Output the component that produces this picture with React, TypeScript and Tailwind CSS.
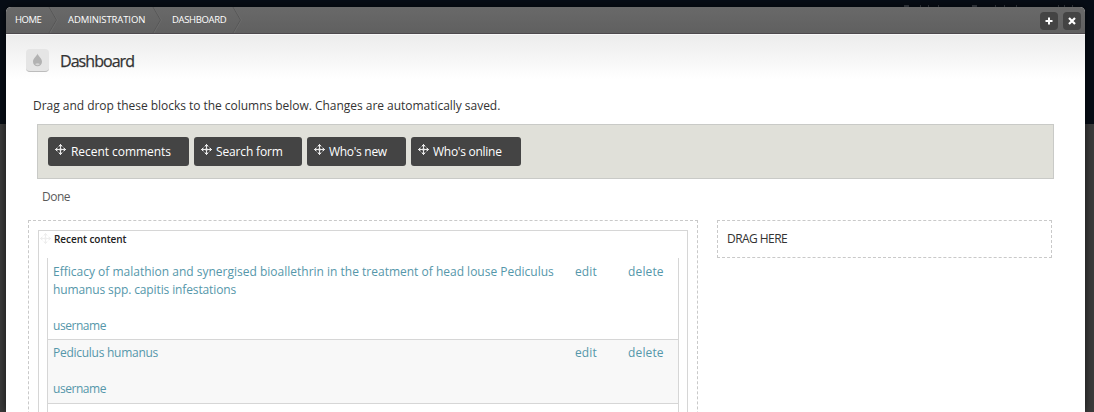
import type { ReactNode } from "react";

function MoveIcon({ className }: { className: string }) {
  return (
    <svg className={className} width="11" height="11" viewBox="0 0 11 11" shapeRendering="crispEdges">
      <path d="M5 0h1v11H5zM0 5h11v1H0zM4 1h3v1H4zM4 9h3v1H4zM1 4h1v3H1zM9 4h1v3H9z" fill="currentColor" />
      <path d="M3 2h5v1H3zM3 8h5v1H3zM2 3h1v5H2zM8 3h1v5H8zM4 4h3v3H4z" fill="currentColor" opacity=".35" />
    </svg>
  );
}

function Crumb({ children, className }: { children: ReactNode; className: string }) {
  return (
    <div className={`flex h-[26px] shrink-0 items-center justify-between ${className}`}>
      <span className="whitespace-nowrap">{children}</span>
      <svg width="10" height="26" viewBox="0 0 10 26" fill="none">
        <path d="M1 0L8.500 13L1 26" stroke="#575757" />
        <path d="M2 0L9.500 13L2 26" stroke="#6b6b6b" />
      </svg>
    </div>
  );
}

function Block({ label, className }: { label: string; className: string }) {
  return (
    <div className={`flex h-[29px] items-center rounded-[3px] bg-[#444] pl-[7px] text-white ${className}`}>
      <MoveIcon className="mb-[4px] shrink-0 text-[#e8e8e8]" />
      <span className="whitespace-nowrap">{label}</span>
    </div>
  );
}

function Row({ children, className }: { children: ReactNode; className: string }) {
  return (
    <div className={`flex border-b border-[#d6d6d6] pl-[5px] leading-[18px] text-[#5597aa] ${className}`}>
      <div className="w-[522px] shrink-0">
        {children}
        <p className="mt-[18px] tracking-[-0.45px]">username</p>
      </div>
      <span className="w-[53px] shrink-0 tracking-[0.1px]">edit</span>
      <span className="tracking-[0.15px]">delete</span>
    </div>
  );
}

export default function App() {
  return (
    <div className="h-[412px] w-[1094px] overflow-hidden bg-[linear-gradient(#070d16_124px,#3b3b3b_124px)] font-['Open_Sans',sans-serif] text-xs text-[#333]">
      <div className="flex h-[7px] items-end justify-end pr-[14px]">
        <svg width="180" height="2" viewBox="0 0 180 2" fill="none">
          <path d="M4 1h5M20 1h1M28 1h1M38 1h1M72 1h5M95 1h1M104 1h1M116 1h1M158 1h1M164 1h1M172 1h1" stroke="#2b2f35" strokeWidth="2" />
        </svg>
      </div>
      <main className="ml-1.5 h-[405px] w-[1079px] rounded-t-[5px] bg-white shadow-[0_0_9px_#000a]">
        <nav className="flex h-[27px] rounded-t-[5px] border-b border-[#4d494d] bg-linear-to-b from-[#696969] to-[#606060] pl-[9px] text-[9.5px] text-white">
          <Crumb className="w-[43px] tracking-[-0.5px]">HOME</Crumb>
          <Crumb className="ml-[10px] w-[94px] tracking-[-0.1px]">ADMINISTRATION</Crumb>
          <Crumb className="ml-[10px] w-[70px] tracking-[-0.35px]">DASHBOARD</Crumb>
          <div className="mt-[5px] mr-[4px] ml-auto flex gap-[5px]">
            <button className="flex h-[18px] w-[18px] items-center justify-center rounded-[4px] bg-[#444]">
              <svg width="8" height="8" viewBox="0 0 8 8"><path d="M4 .5v7M.5 4h7" stroke="#fff" strokeWidth="2" /></svg>
            </button>
            <button className="flex h-[18px] w-[18px] items-center justify-center rounded-[4px] bg-[#444]">
              <svg width="8" height="8" viewBox="0 0 8 8"><path d="M1 1l6 6M7 1L1 7" stroke="#fff" strokeWidth="2.200" /></svg>
            </button>
          </div>
        </nav>
        <header className="flex h-[45px] border-t border-[#f8f8f8] bg-linear-to-b from-[#ececec] to-white pl-5">
          <div className="mt-[14px] flex h-[23px] w-[23px] items-center justify-center rounded-[4px] border-b border-[#bcbcbc] bg-[#e5e5e5]">
            <svg width="11" height="14" viewBox="0 0 11 14">
              <path d="M5.500.5C5.900 3 10 5 10 8.800a4.500 4.500 0 0 1-9 0C1 5 5.100 3 5.500.5z" fill="#b2b2b2" />
              <path d="M3 11q2.500-1.500 5 0-2.500 2.600-5 0z" fill="#d5d5d5" />
            </svg>
          </div>
          <h1 className="mt-[14px] ml-[11px] text-[16px] leading-6 tracking-[-0.95px] [-webkit-text-stroke:0.25px_#333]">Dashboard</h1>
        </header>
        <p className="mt-[18px] ml-[27px] leading-[18px] tracking-[-0.03px]">Drag and drop these blocks to the columns below. Changes are automatically saved.</p>
        <section className="mt-[9px] ml-[31px] flex h-[55px] w-[1017px] gap-[5px] border border-[#c9cac7] bg-[#e0e0d9] pt-3 pl-[10px]">
          <Block label="Recent comments" className="w-[141px] gap-[5px] tracking-[-0.05px]" />
          <Block label="Search form" className="w-[108px] gap-[4px] tracking-[-0.15px]" />
          <Block label="Who's new" className="w-[99px] gap-[4px] tracking-[-0.3px]" />
          <Block label="Who's online" className="w-[110px] gap-[4px] tracking-[-0.27px]" />
        </section>
        <p className="mt-[9px] ml-9 leading-[18px] tracking-[-0.5px] text-[#5a5a5a]">Done</p>
        <div className="mt-[14px] ml-[22px] flex items-start gap-[19px]">
          <section className="h-[260px] w-[670px] border border-dashed border-[#c9c9c9] p-[9px]">
            <div className="h-[240px] border border-[#d6d6d6]">
              <div className="flex h-[27px] items-start text-[#222]">
                <MoveIcon className="mt-[2px] ml-[1px] text-[#eeeeee]" />
                <h2 className="ml-[3px] text-[10px] leading-4 font-semibold tracking-[-0.05px]">Recent content</h2>
              </div>
              <div className="mx-2 border-x border-[#d6d6d6]">
                <Row className="h-[82px] pt-[5px]">
                  <p>Efficacy of malathion and synergised bioallethrin in the treatment of head louse Pediculus</p>
                  <p className="tracking-[-0.12px]">humanus spp. capitis infestations</p>
                </Row>
                <Row className="h-[64px] bg-[#f8f8f8] pt-[4px]">
                  <p className="tracking-[-0.27px]">Pediculus humanus</p>
                </Row>
                <div className="h-10" />
              </div>
            </div>
          </section>
          <section className="h-[38px] w-[335px] border border-dashed border-[#c9c9c9] pt-[9px] pl-[9px] leading-[18px] tracking-[-0.55px]">DRAG HERE</section>
        </div>
      </main>
    </div>
  );
}
